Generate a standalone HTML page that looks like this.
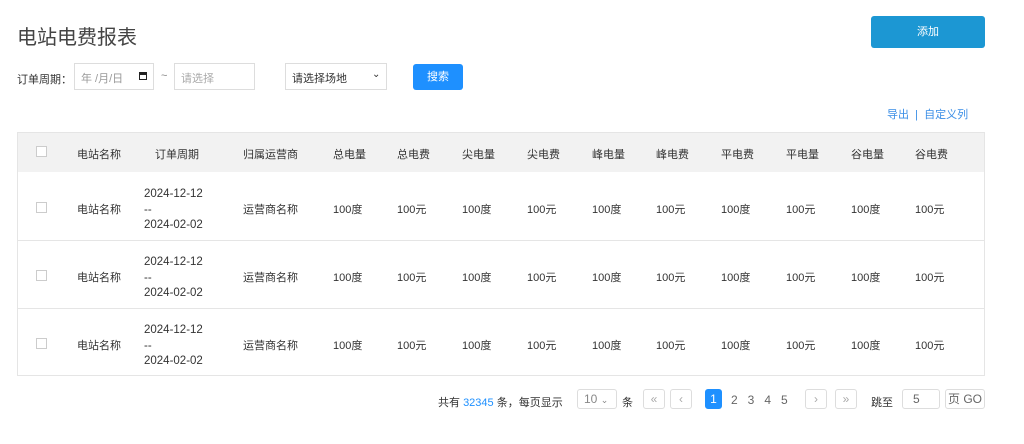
<!DOCTYPE html>
<html><head><meta charset="utf-8"><style>
body{margin:0;width:1024px;height:444px;background:#fff;font-family:"Liberation Sans","Noto Sans CJK SC",sans-serif;color:#333;position:relative;overflow:hidden;font-size:11px}
.a{position:absolute;white-space:nowrap}
.box{position:absolute;border:1px solid #ddd;background:#fff;box-sizing:border-box}
.cb{position:absolute;width:11px;height:11px;border:1px solid #ccc;background:#fff;box-sizing:border-box}
.pg{position:absolute;top:389px;height:20px;border:1px solid #ddd;border-radius:3px;box-sizing:border-box;color:#aaa;text-align:center;line-height:18px;font-size:12px}
</style></head><body>
<div class="a" style="left:17px;top:21px;font-size:20px;color:#444">电站电费报表</div>
<div class="a" style="left:871px;top:16px;width:114px;height:32px;background:#1c97d3;border-radius:3px;color:#fff;text-align:center;line-height:32px;font-size:11px">添加</div>
<div class="a" style="left:17px;top:71px;font-size:11px">订单周期：</div>
<div class="box" style="left:74px;top:63px;width:80px;height:27px"><span class="a" style="left:6px;top:6px;color:#999">年 /月/日</span><span class="a" style="left:64px;top:8px;width:8px;height:8px;border:1.5px solid #222;border-top-width:3px;box-sizing:border-box"></span></div>
<div class="a" style="left:161px;top:70px;color:#888">~</div>
<div class="box" style="left:174px;top:63px;width:81px;height:27px"><span class="a" style="left:6px;top:6px;color:#aaa">请选择</span></div>
<div class="box" style="left:285px;top:63px;width:102px;height:27px"><span class="a" style="left:6px;top:6px;color:#333">请选择场地</span><span class="a" style="left:86px;top:5px;font-size:10px">⌄</span></div>
<div class="a" style="left:413px;top:64px;width:50px;height:26px;background:#1e90ff;border-radius:3px;color:#fff;text-align:center;line-height:26px">搜索</div>
<div class="a" style="left:887px;top:106px;color:#3a8ee6">导出 &nbsp;| &nbsp;自定义列</div>
<div class="a" style="left:17px;top:132px;width:968px;height:244px;border:1px solid #e5e5e5;box-sizing:border-box"></div>
<div class="a" style="left:18px;top:133px;width:966px;height:39px;background:#f2f2f2"></div>
<div class="a" style="left:18px;top:240px;width:966px;height:1px;background:#e5e5e5"></div>
<div class="a" style="left:18px;top:308px;width:966px;height:1px;background:#e5e5e5"></div>
<div id="t"></div>
<div class="a" style="left:438px;top:394px">共有 <span style="color:#1e90ff">32345</span> 条，每页显示</div>
<div class="pg" style="left:577px;width:40px;text-align:left;padding-left:6px;color:#888">10 <span style="font-size:9px">⌄</span></div>
<div class="a" style="left:622px;top:394px">条</div>
<div class="pg" style="left:643px;width:22px">«</div>
<div class="pg" style="left:670px;width:22px">‹</div>
<div class="pg" style="left:705px;width:17px;background:#1e90ff;border-color:#1e90ff;color:#fff">1</div>
<div class="a" style="left:731px;top:393px;color:#666;font-size:12px">2 &nbsp;&nbsp;3 &nbsp;&nbsp;4 &nbsp;&nbsp;5</div>
<div class="pg" style="left:805px;width:22px">›</div>
<div class="pg" style="left:835px;width:22px">»</div>
<div class="a" style="left:871px;top:394px">跳至</div>
<div class="pg" style="left:902px;width:38px;text-align:left;padding-left:10px;color:#666">5</div>
<div class="pg" style="left:945px;width:40px;color:#666">页 GO</div>
<script>
var h=["电站名称","订单周期","归属运营商","总电量","总电费","尖电量","尖电费","峰电量","峰电费","平电费","平电量","谷电量","谷电费"];
var x=[77,155,243,333,397,462,527,592,656,721,786,851,915];
var s='<div class="cb" style="left:36px;top:146px"></div>';
h.forEach((t,i)=>s+='<div class="a" style="left:'+x[i]+'px;top:146px">'+t+'</div>');
[172,240,308].forEach(y=>{
 var c=y+35;
 s+='<div class="cb" style="left:36px;top:'+(c-5)+'px"></div>';
 var v=["电站名称",null,"运营商名称","100度","100元","100度","100元","100度","100元","100度","100元","100度","100元"];
 v.forEach((t,i)=>{
  if(t)s+='<div class="a" style="left:'+x[i]+'px;top:'+(c-6)+'px">'+t+'</div>';
 });
 s+='<div class="a" style="left:144px;top:'+(c-20)+'px;line-height:15.5px;font-size:11.5px">2024-12-12<br>--<br>2024-02-02</div>';
});
document.getElementById('t').innerHTML=s;
</script>
</body></html>
